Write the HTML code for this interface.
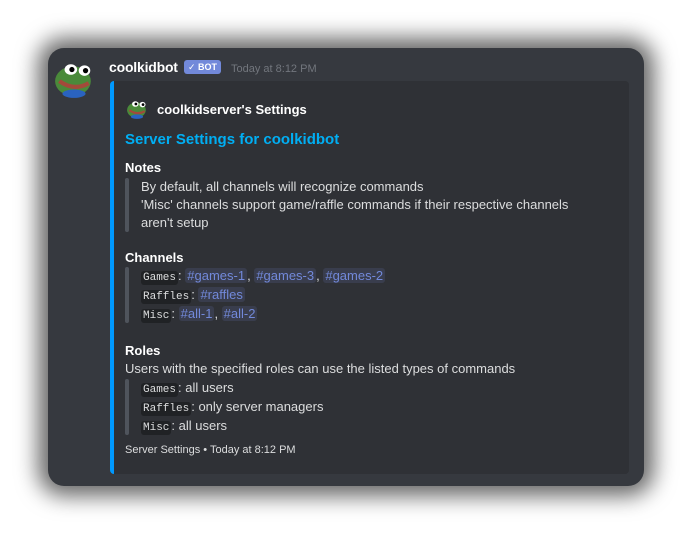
<!DOCTYPE html>
<html><head><style>
*{margin:0;padding:0;box-sizing:border-box}
body{width:692px;height:535px;background:#fff;font-family:"Liberation Sans","DejaVu Sans",sans-serif;position:relative;overflow:hidden}
.win{position:absolute;left:48px;top:48px;width:596px;height:438px;background:#36393f;border-radius:16px;box-shadow:0 0 22px 10px rgba(0,0,0,.6)}
.t{position:absolute;white-space:nowrap;font-size:13px;color:#dcddde}
.embed{position:absolute;left:110px;top:81px;width:519px;height:393px;background:#2f3136;border-left:4px solid #0099ff;border-radius:4px}
.q{position:absolute;left:125px;width:4px;background:#4f545c;border-radius:2px}
code{font-family:"Liberation Mono",monospace;font-size:11px;background:#202225;padding:1px 2px;border-radius:3px;color:#dcddde}
.ch{color:#7289da;background:rgba(114,137,218,.15);padding:0 2px;border-radius:3px}
b{font-weight:bold;color:#fff}
</style></head><body>
<div class="win"></div>
<svg style="position:absolute;left:53px;top:59px" width="42" height="40" viewBox="0 0 40 38">
<ellipse cx="19" cy="21" rx="17" ry="14" fill="#4a8a3a"/>
<ellipse cx="20" cy="33" rx="11" ry="4" fill="#2a63c0"/>
<ellipse cx="17" cy="10" rx="6" ry="5" fill="#fff"/><ellipse cx="30" cy="11" rx="5.5" ry="5" fill="#fff"/>
<circle cx="18" cy="10" r="2.5" fill="#000"/><circle cx="31" cy="11" r="2.5" fill="#000"/>
<path d="M6 21 Q20 31 34 23" stroke="#a34a3a" stroke-width="4" fill="none"/>
</svg>
<div class="t" style="left:109px;top:59px;font-size:14px;font-weight:bold;color:#fff;letter-spacing:-0.2px">coolkidbot</div>
<div class="t" style="left:184px;top:60px;background:#7289da;color:#fff;font-size:9px;font-weight:bold;padding:1px 4px;border-radius:3px;height:14px;line-height:13px">✓ BOT</div>
<div class="t" style="left:231px;top:63px;font-size:11px;color:#72767d">Today at 8:12 PM</div>
<div class="embed"></div>
<svg style="position:absolute;left:126px;top:98px" width="22" height="22" viewBox="0 0 40 38">
<ellipse cx="19" cy="21" rx="17" ry="14" fill="#4a8a3a"/>
<ellipse cx="20" cy="33" rx="11" ry="4" fill="#2a63c0"/>
<ellipse cx="17" cy="10" rx="6" ry="5" fill="#fff"/><ellipse cx="30" cy="11" rx="5.5" ry="5" fill="#fff"/>
<circle cx="18" cy="10" r="2.5" fill="#000"/><circle cx="31" cy="11" r="2.5" fill="#000"/>
<path d="M6 21 Q20 31 34 23" stroke="#a34a3a" stroke-width="4" fill="none"/>
</svg>
<div class="t" style="left:157px;top:102px;font-size:13px;font-weight:bold;color:#fff">coolkidserver's Settings</div>
<div class="t" style="left:125px;top:131px;font-size:15px;font-weight:bold;color:#00aff4">Server Settings for coolkidbot</div>
<div class="t" style="left:125px;top:160px"><b>Notes</b></div>
<div class="q" style="top:178px;height:54px"></div>
<div class="t" style="left:141px;top:179px">By default, all channels will recognize commands</div>
<div class="t" style="left:141px;top:197px">'Misc' channels support game/raffle commands if their respective channels</div>
<div class="t" style="left:141px;top:215px">aren't setup</div>
<div class="t" style="left:125px;top:250px"><b>Channels</b></div>
<div class="q" style="top:267px;height:56px"></div>
<div class="t" style="left:141px;top:268px"><code>Games</code>: <span class="ch">#games-1</span>, <span class="ch">#games-3</span>, <span class="ch">#games-2</span></div>
<div class="t" style="left:141px;top:287px"><code>Raffles</code>: <span class="ch">#raffles</span></div>
<div class="t" style="left:141px;top:306px"><code>Misc</code>: <span class="ch">#all-1</span>, <span class="ch">#all-2</span></div>
<div class="t" style="left:125px;top:343px"><b>Roles</b></div>
<div class="t" style="left:125px;top:361px">Users with the specified roles can use the listed types of commands</div>
<div class="q" style="top:379px;height:56px"></div>
<div class="t" style="left:141px;top:380px"><code>Games</code>: all users</div>
<div class="t" style="left:141px;top:399px"><code>Raffles</code>: only server managers</div>
<div class="t" style="left:141px;top:418px"><code>Misc</code>: all users</div>
<div class="t" style="left:125px;top:444px;font-size:11px;color:#dcddde">Server Settings • Today at 8:12 PM</div>
</body></html>
